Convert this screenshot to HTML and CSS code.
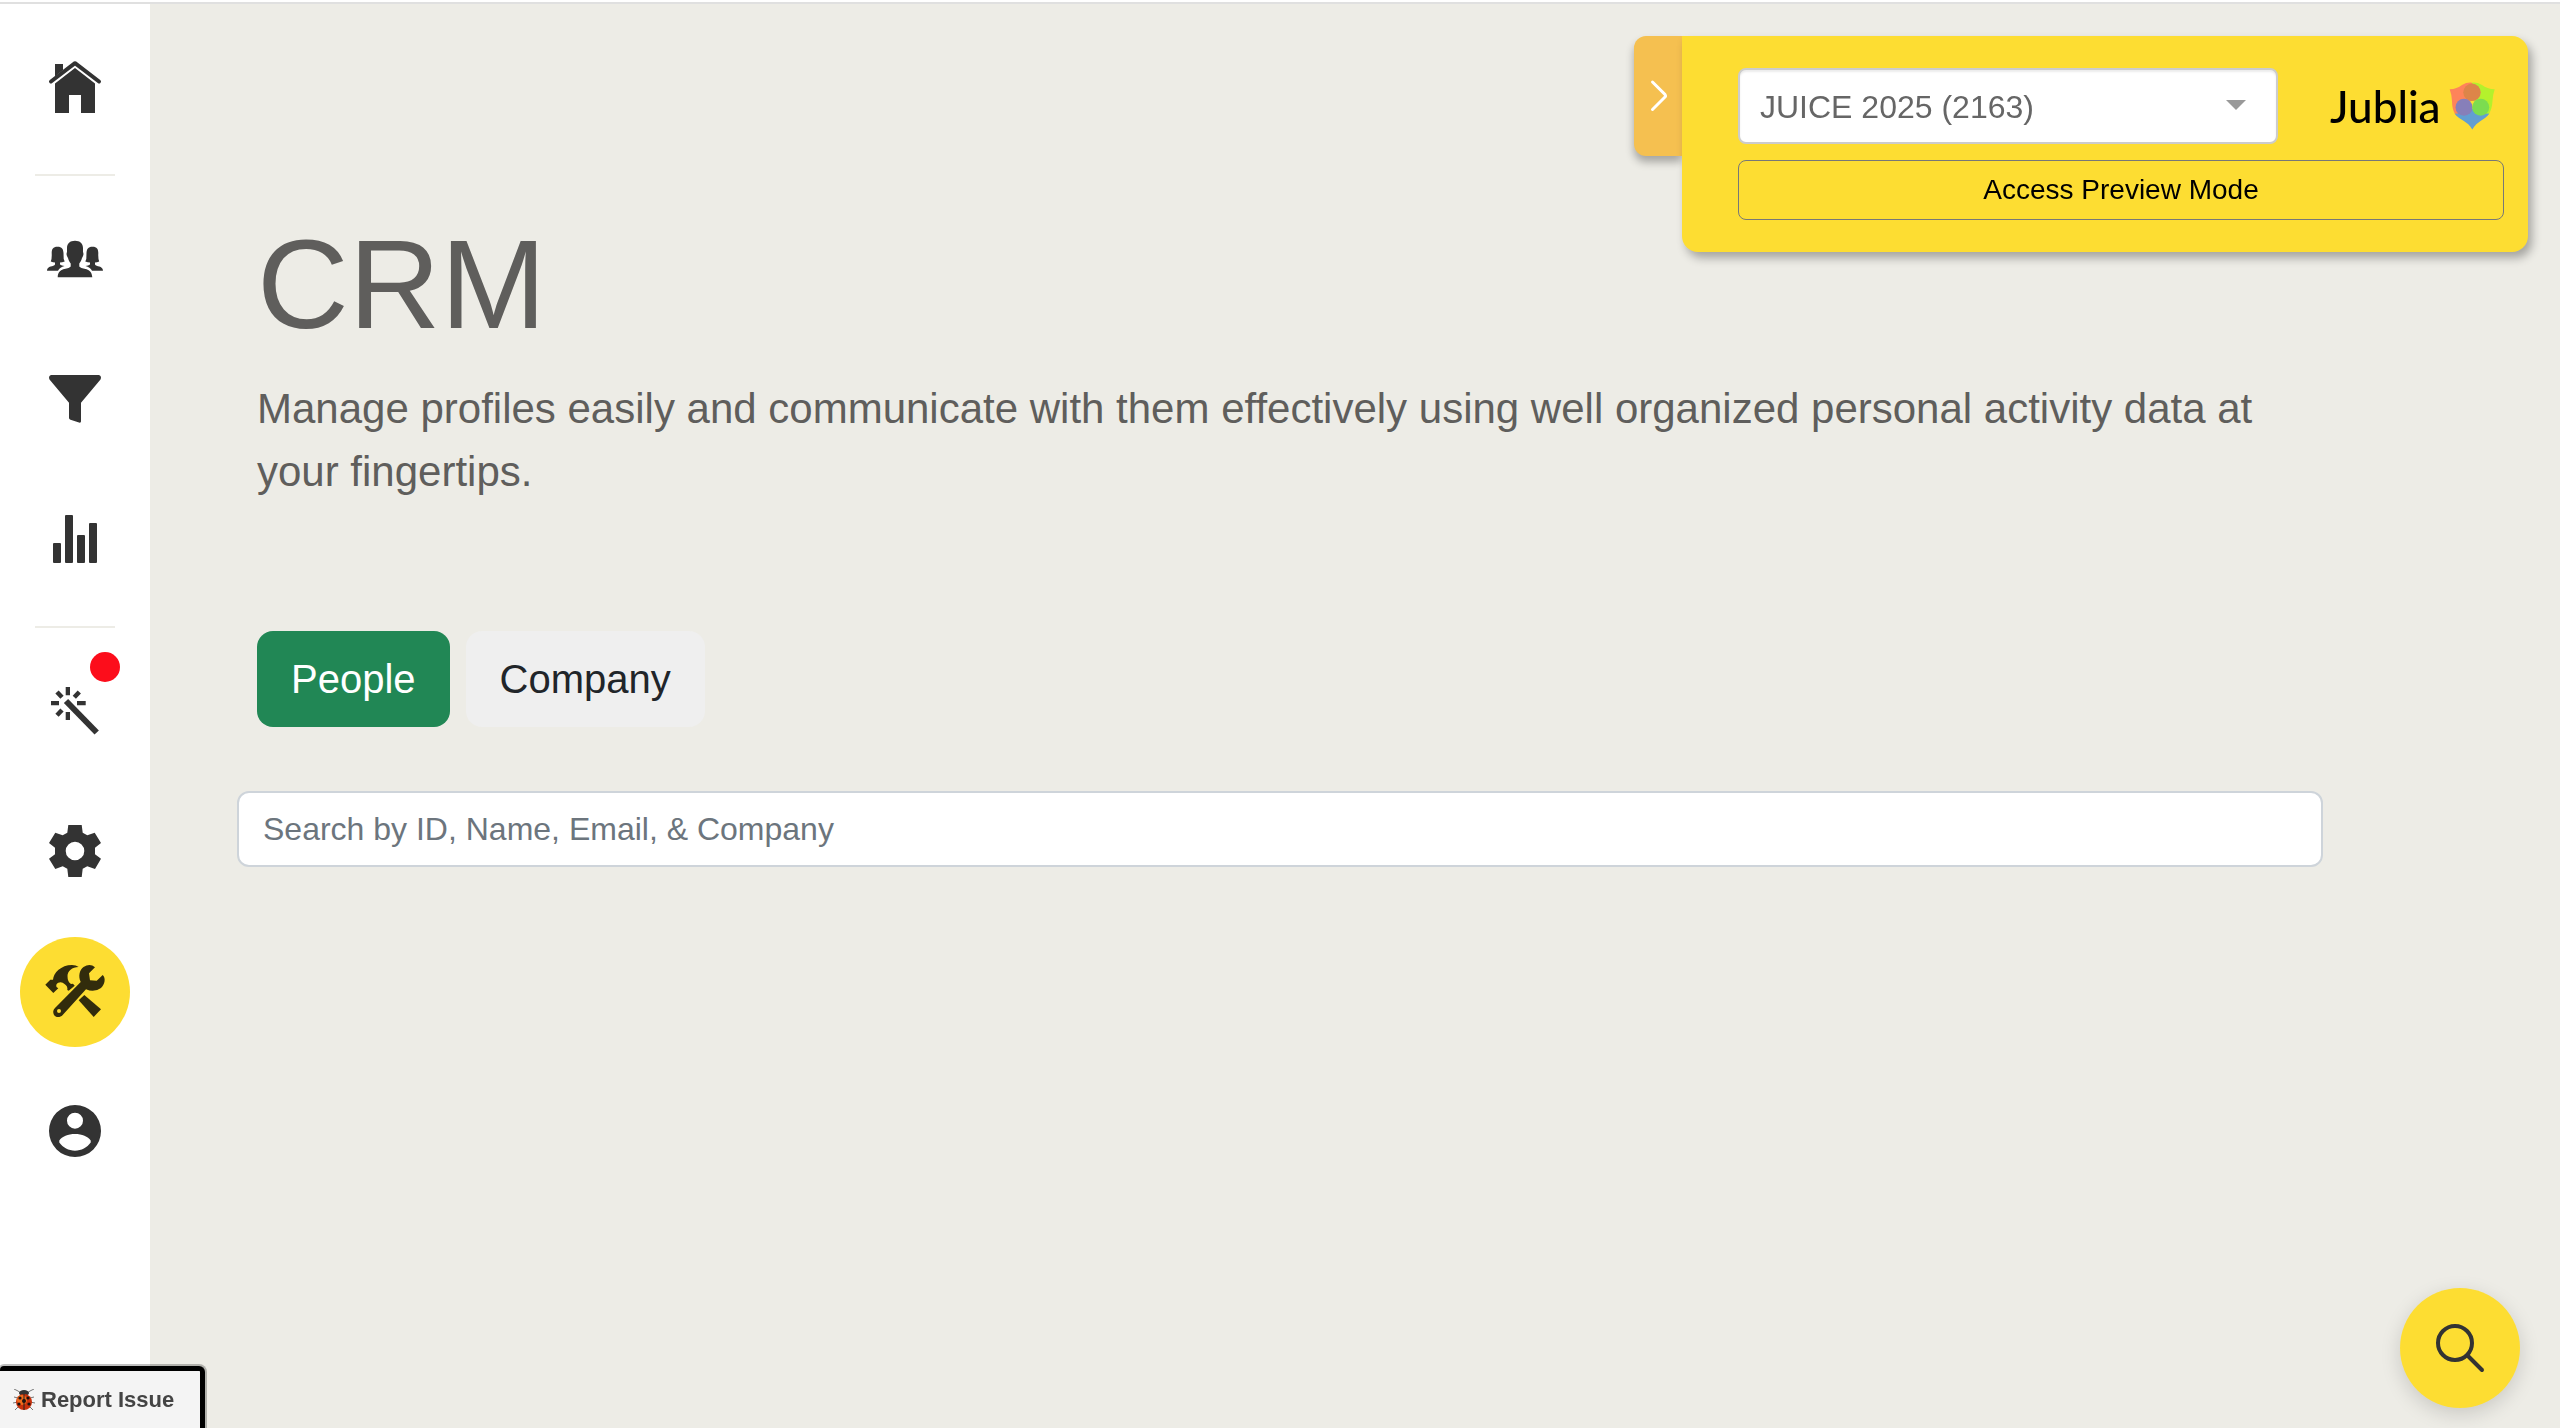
FILE: index.html
```
<!DOCTYPE html>
<html lang="en">
<head>
  <meta charset="utf-8" />
  <meta name="viewport" content="width=device-width, initial-scale=1.0">
  <title>CRM</title>
  <link rel="stylesheet" href="styles.css">
</head>
<body>

  <div class="layout">
    <nav class="sidebar">
      <a class="nav-item" href="#home" aria-label="Home">
        <svg class="nav-icon" viewBox="0 0 60 60">
          <path d="M10 6H18V12L10 18.500Z" />
          <path d="M6 23.500 30 5.200 54 23.500" fill="none" stroke="currentColor" stroke-width="4" stroke-linecap="round" stroke-linejoin="round" />
          <path d="M30 10 50 25.500V55H36V37H24V55H10V25.500Z" />
        </svg>
      </a>
      <hr class="divider">
      <a class="nav-item" href="#people" aria-label="People">
        <svg class="nav-icon" viewBox="0 0 60 60">
          <path d="M30 10.700C35 10.700 38 13.500 38 18V22Q39 24 37.800 26.500L37 28C36.500 30 35.500 32 34.300 33.500V36.500C37 40 47 37 47.300 47.300H12.700C13 37 23 40 25.700 36.500V33.500C24.500 32 23.500 30 23 28L22.200 26.500Q21 24 22 22V18C22 13.500 25 10.700 30 10.700Z" />
          <path id="side-person" d="M12.500 16.700C17 16.700 18.300 19 18.500 23L18.700 29 19.700 31.500Q17 32.500 15 32.500V34.500Q16.500 35.500 19.500 36Q15 37 13 40.700H2C2 35.500 9 37 10 34.500V32.500Q8 32.500 5.800 31.500Q7 29 6.700 23C6.700 19 8 16.700 12.500 16.700Z" />
          <use href="#side-person" transform="translate(60 0) scale(-1 1)" />
        </svg>
      </a>
      <a class="nav-item" href="#filter" aria-label="Filter">
        <svg class="nav-icon" viewBox="0 0 60 60">
          <path d="M6 5H54Q57 6 55.500 9.500L36 32.700V51.500Q35.500 53.200 34 52.600L25.500 49.700Q24 49.200 24 48V32.700L4.500 9.500Q3 6 6 5Z" />
        </svg>
      </a>
      <a class="nav-item" href="#reports" aria-label="Reports">
        <svg class="nav-icon" viewBox="0 0 60 60">
          <rect x="8" y="33" width="8" height="20" rx="1" />
          <rect x="20" y="5" width="8" height="48" rx="1" />
          <rect x="32" y="25" width="8" height="28" rx="1" />
          <rect x="44" y="13" width="8" height="40" rx="1" />
        </svg>
      </a>
      <hr class="divider">
      <a class="nav-item" href="#wizard" aria-label="What's new">
        <svg class="nav-icon" viewBox="0 0 60 60">
          <path d="M20.700 5H25V13.300H20.700ZM20.700 30H25V38H20.700ZM6 19H14V23.300H6ZM32 19H40.700V23.300H32Z" />
          <path d="M12 10 17 15.300M34.300 10 29.300 15.300M12 33.300 17 28" fill="none" stroke="currentColor" stroke-width="4.500" />
          <path d="M21 19 51.700 50.500" fill="none" stroke="currentColor" stroke-width="6" />
        </svg>
        <span class="dot"></span>
      </a>
      <a class="nav-item" href="#settings" aria-label="Settings">
        <svg class="nav-icon" viewBox="0 0 60 60">
          <path fill-rule="evenodd" d="M23.300 3H36.700L37.700 10.700 42.300 13.300 49.700 10.700 56 21 50 25.700V32.300L56 36.700 50 47 42.300 44.200 37.700 46.700 36.700 55H23.300L22.300 46.700 17.700 44.200 10.300 47 4 36.700 10 32.300V25.700L4 21 10.300 10.700 17.700 13.300 22.300 10.700ZM30 19.700A9.300 9.300 0 1 0 30 38.300 9.300 9.300 0 1 0 30 19.700Z" />
        </svg>
      </a>
      <a class="nav-item" href="#tools" aria-label="Tools" aria-current="page">
        <span class="nav-active">
          <svg class="nav-icon" viewBox="0 0 60 60">
            <path d="M.3 22.700 5.300 17.700H8C8.500 11 16 3 27 3Q31 3 33.700 5C27 5 22.500 9 22.500 14Q22.500 20 26 22L28 21.700 29.700 23.700 23.700 28.700 22.300 28Q23 24 19.500 22Q17 19.500 13.300 20.700Q10.500 22 11.500 25L13.300 26.300 8.300 31Z" />
            <path d="M39.300 33 56 47.300 48.700 55 33.700 38.300Z" />
            <path fill-rule="evenodd" d="M50 5.300 44 11.300 45 18.300 51.700 18.700 57.700 13C61 16 60 22 56 26Q49 31 41 27.300L17.700 53C15 56 10.500 55.500 9 53Q7 49 10 46L35.700 20C33 14 34.500 8 38.500 5Q45 1 50 5.300ZM14 47A2 2 0 1 0 14 51 2 2 0 1 0 14 47Z" />
          </svg>
        </span>
      </a>
      <a class="nav-item" href="#account" aria-label="Account">
        <svg class="nav-icon" viewBox="0 0 60 60">
          <path fill-rule="evenodd" d="M30 3A26 26 0 1 0 30 55 26 26 0 1 0 30 3ZM30 10.700A8 8 0 1 1 30 26.700 8 8 0 1 1 30 10.700ZM30 32C37 32 43 34.500 45.700 38.500V40.500C42 45.500 36.500 48.700 30 48.700S18 45.500 14.300 40.500V38.500C17 34.500 23 32 30 32Z" />
        </svg>
      </a>
    </nav>

    <main class="content">
      <div class="intro">
        <h1>CRM</h1>
        <p>Manage profiles easily and communicate with them effectively using well organized personal activity data at your fingertips.</p>
        <div class="tabs">
          <button class="tab active" type="button">People</button>
          <button class="tab" type="button">Company</button>
        </div>
      </div>
      <input class="search" type="search" aria-label="Search" placeholder="Search by ID, Name, Email, &amp; Company">
    </main>
  </div>

  <!-- Event picker -->
  <aside class="event-panel">
    <button class="panel-toggle" type="button" aria-label="Hide panel">
      <svg width="48" height="120" viewBox="0 0 48 120">
        <path d="M18.500 46 31 58.500Q32 60 31 61L18.500 73.500" fill="none" stroke="#fff" stroke-width="3" stroke-linecap="round" />
      </svg>
    </button>
    <div class="panel-body">
      <div class="panel-row">
        <div class="event-select">
          <select aria-label="Event">
            <option>JUICE 2025 (2163)</option>
          </select>
          <svg class="caret" width="20" height="10" viewBox="0 0 20 10"><path d="M0 0H20L10 10Z" /></svg>
        </div>
        <div class="logo">
          <span>Jublia</span>
          <svg width="48" height="48" viewBox="0 0 48 48">
            <clipPath id="shield">
              <path d="M1.700 7.300Q9 7 14 3Q19 0 24 .7Q29 0 34 3Q39 7 46.700 7.300Q45 12 44.500 19Q44 27 41 32C37 38 29 39 24.300 47.500C20 39 11 38 7 32Q4 27 4 19Q3.500 12 1.700 7.300Z" />
            </clipPath>
            <g clip-path="url(#shield)">
              <path fill="#fe845a" d="M0 0H24V34H0Z" />
              <path fill="#b4f12c" d="M24 0H48V34H24Z" />
              <path fill="#629ed2" d="M0 31Q10 34 24 26Q38 34 48 31V48H0Z" />
            </g>
            <path fill="#fddd32" d="M24.300 27 20 19H29Z" />
            <circle cx="24" cy="10.300" r="8.700" fill="#dd8549" />
            <circle cx="16" cy="25.300" r="8.500" fill="#877fb9" />
            <circle cx="32.700" cy="25.300" r="8.500" fill="#7cdc50" />
          </svg>
        </div>
      </div>
      <button class="preview-btn" type="button">Access Preview Mode</button>
    </div>
  </aside>

  <button class="fab" type="button" aria-label="Search">
    <svg width="60" height="60" viewBox="0 0 60 60">
      <circle cx="25" cy="25" r="17" />
      <path d="M38 38 52 52" />
    </svg>
  </button>

  <button class="report" type="button">
    <svg width="22" height="22" viewBox="0 0 22 22">
      <path d="M8 4 5 2 1 0M14 4 17 2 21 0M5 9 1 8M17 9 21 8M5 13 0 14M17 13 22 14M6 17 2 21M16 17 20 21" fill="none" stroke="#777" stroke-width="1" />
      <ellipse cx="11" cy="4" rx="5" ry="3" fill="#333" />
      <ellipse cx="11" cy="13" rx="8" ry="8" fill="#c9300b" />
      <ellipse cx="9" cy="11" rx="5" ry="5" fill="#f06a1c" />
      <path d="M11 5V21" stroke="#222" stroke-width="1" />
      <g fill="#1c1210">
        <circle cx="7" cy="9" r="1.600" />
        <circle cx="15" cy="9" r="1.600" />
        <circle cx="11" cy="12" r="2" />
        <circle cx="6" cy="15" r="1.600" />
        <circle cx="16" cy="15" r="1.600" />
      </g>
    </svg>
    Report Issue
  </button>

</body>
</html>
```
FILE: styles.css
```
/* --- General Setup --- */
:root {
  --bg-color: #edece6;
  --yellow: #fddd32;
  --text-color: #5f5e5c;
  --icon-color: #333;
}
*, *::before, *::after {
  box-sizing: border-box;
}
body {
  margin: 0;
  border-top: 2px solid #fff;
  background: var(--bg-color);
  color: var(--text-color);
  font-family: "Liberation Sans", Arial, sans-serif;
}
button, input, select {
  font-family: inherit;
}
button {
  cursor: pointer;
}
.layout {
  display: flex;
  min-height: calc(100vh - 2px);
  border-top: 2px solid #e0e0e0;
}

/* --- Sidebar --- */
.sidebar {
  flex: 0 0 150px;
  padding-top: 14px;
  background: #fff;
}
.nav-item {
  position: relative;
  display: flex;
  align-items: center;
  justify-content: center;
  height: 140px;
  color: var(--icon-color);
}
.nav-icon {
  width: 60px;
  height: 60px;
  fill: currentColor;
  overflow: visible;
}
.nav-active {
  display: flex;
  align-items: center;
  justify-content: center;
  width: 110px;
  height: 110px;
  border-radius: 50%;
  background: var(--yellow);
  color: #322c0c;
}
.dot {
  position: absolute;
  top: 10px;
  right: 30px;
  width: 30px;
  height: 30px;
  border-radius: 50%;
  background: #fc0d1b;
}
.divider {
  width: 80px;
  height: 2px;
  margin: 16px auto 14px;
  border: 0;
  background: var(--bg-color);
}

/* --- Main content --- */
.content {
  flex: 1;
  padding: 203px 237px 40px 87px;
}
.intro {
  padding: 0 20px;
}
h1 {
  margin: 0 0 16px;
  font-size: 127px;
  font-weight: 400;
  line-height: 154px;
}
p {
  margin: 0;
  font-size: 42px;
  line-height: 63px;
}
.tabs {
  display: flex;
  gap: 16px;
  margin: 128px 0 64px;
}
.tab {
  height: 96px;
  padding: 0 34px;
  border: 0;
  border-radius: 16px;
  background: #efefef;
  color: #212529;
  font-size: 40px;
}
.tab.active {
  background: #218755;
  color: #fff;
}
.search {
  display: block;
  width: 100%;
  height: 76px;
  padding: 0 24px;
  border: 2px solid #ced4da;
  border-radius: 12px;
  background: #fff;
  font-size: 32px;
  appearance: none;
}
.search::placeholder {
  color: #6c757d;
}

/* --- Event panel --- */
.event-panel {
  position: fixed;
  top: 36px;
  right: 32px;
  display: flex;
  align-items: flex-start;
}
.panel-toggle {
  display: flex;
  padding: 0;
  border: 0;
  border-radius: 12px 0 0 12px;
  background: #f5c050;
  box-shadow: 0 6px 8px rgba(0, 0, 0, 0.3);
}
.panel-body {
  position: relative;
  padding: 32px 24px 32px 56px;
  border-radius: 0 16px 16px 16px;
  background: var(--yellow);
  box-shadow: 4px 6px 10px rgba(0, 0, 0, 0.3);
}
.panel-row {
  display: flex;
  align-items: center;
  gap: 52px;
  margin-bottom: 16px;
}
.event-select {
  position: relative;
}
.event-select select {
  display: block;
  width: 540px;
  height: 76px;
  padding: 2px 60px 0 20px;
  border: 2px solid #ccc;
  border-radius: 8px;
  background: #fff;
  box-shadow: inset 0 2px 2px rgba(0, 0, 0, 0.08);
  color: #666;
  font-size: 32px;
  appearance: none;
}
.caret {
  position: absolute;
  top: 32px;
  right: 32px;
  fill: #999;
  pointer-events: none;
}
.logo {
  display: flex;
  flex: 1;
  align-items: center;
  justify-content: space-between;
  width: 174px;
  padding-right: 8px;
  color: #000;
  font-family: Lato, sans-serif;
  font-size: 44px;
  font-weight: 500;
  line-height: 48px;
}
.preview-btn {
  width: 100%;
  height: 60px;
  border: 1px solid #777;
  border-radius: 8px;
  background: transparent;
  color: #000;
  font-size: 28px;
}

/* --- Floating buttons --- */
.fab {
  position: fixed;
  right: 40px;
  bottom: 20px;
  display: flex;
  align-items: center;
  justify-content: center;
  width: 120px;
  height: 120px;
  border: 0;
  border-radius: 50%;
  background: var(--yellow);
  box-shadow: 0 6px 20px rgba(0, 0, 0, 0.15);
}
.fab svg {
  fill: none;
  stroke: var(--icon-color);
  stroke-width: 4;
  stroke-linecap: round;
}
.report {
  position: fixed;
  left: 0;
  bottom: 0;
  display: flex;
  align-items: center;
  gap: 6px;
  height: 62px;
  padding: 0 26px 0 13px;
  border: solid #000;
  border-width: 5px 5px 0 0;
  border-radius: 4px 6px 0 0;
  background: #f4f4f4;
  box-shadow: 0 0 0 2px rgba(0, 0, 0, 0.25);
  color: #444;
  font-size: 22px;
  font-weight: 700;
}
```
